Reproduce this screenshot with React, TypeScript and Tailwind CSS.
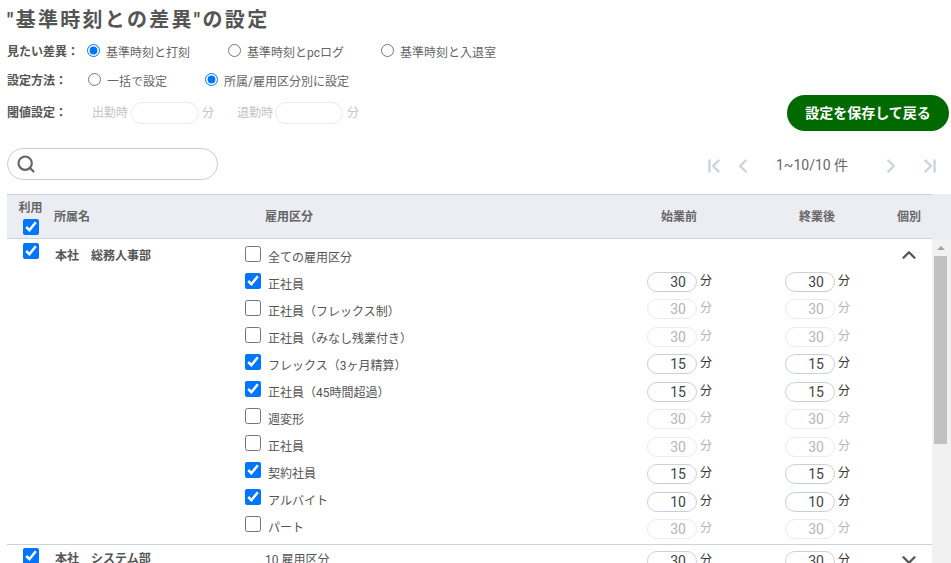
import React from "react";
import { Search, ChevronUp, ChevronDown, ChevronLeft, ChevronRight, ChevronFirst, ChevronLast } from "lucide-react";

const rows: [string, boolean, string][] = [
  ["正社員", true, "30"],
  ["正社員（フレックス制）", false, "30"],
  ["正社員（みなし残業付き）", false, "30"],
  ["フレックス（3ヶ月精算）", true, "15"],
  ["正社員（45時間超過）", true, "15"],
  ["週変形", false, "30"],
  ["正社員", false, "30"],
  ["契約社員", true, "15"],
  ["アルバイト", true, "10"],
  ["パート", false, "30"],
];

function Minutes({ value, on }: { value: string; on: boolean }) {
  return (
    <div className="flex items-center h-[20px]">
      <div className={`w-[50px] h-[20px] shrink-0 rounded-[10px] border text-right pr-[10px] text-[14px] leading-[19px] ${on ? "border-[#c8d0da] text-[#444]" : "border-[#e9ebef] text-[#b5b5b5]"}`}>{value}</div>
      <span className={`ml-[3px] text-[12px] -mt-[2px] ${on ? "text-[#333]" : "text-[#b5b5b5]"}`}>分</span>
    </div>
  );
}

function MinutesColumn({ w }: { w: string }) {
  return (
    <div className={`${w} shrink-0 pt-[33px]`}>
      {rows.map(([n, on, v], i) => (
        <div key={i} className="h-[27.45px]">
          <Minutes value={v} on={on} />
        </div>
      ))}
    </div>
  );
}

function Radio({ checked, label, w }: { checked?: boolean; label: string; w: string }) {
  return (
    <label className={`flex items-center ${w}`}>
      <input type="radio" readOnly checked={!!checked} className="w-[13px] h-[13px] m-0 -mt-[3px]" />
      <span className="ml-[6px] text-[12px] text-[#666] mt-[1px]">{label}</span>
    </label>
  );
}

export default function App() {
  return (
    <div className="relative w-[951px] h-[563px] overflow-hidden bg-white text-[#555] flex flex-col" style={{ fontFamily: "Roboto, 'Noto Sans CJK JP', sans-serif" }}>
      <div className="flex flex-col pl-[7px] pr-[2px]">
        <h1 className="h-[42px] pt-[6px] text-[20px] leading-[28px] font-bold tracking-[2.3px] text-[#555]">"基準時刻との差異"の設定</h1>
        <div className="flex items-center h-[20px]">
          <span className="w-[80px] text-[12px] font-bold text-[#555]">見たい差異：</span>
          <Radio checked label="基準時刻と打刻" w="w-[141px]" />
          <Radio label="基準時刻とpcログ" w="w-[153px]" />
          <Radio label="基準時刻と入退室" w="w-[130px]" />
        </div>
        <div className="flex items-center h-[20px] mt-[9px]">
          <span className="w-[81px] text-[12px] font-bold text-[#555]">設定方法：</span>
          <Radio label="一括で設定" w="w-[117px]" />
          <Radio checked label="所属/雇用区分別に設定" w="w-[160px]" />
        </div>
        <div className="flex items-center justify-between h-[36px] mt-[4px]">
          <div className="flex items-center text-[12px] text-[#c4c4c4]">
            <span className="w-[85px] font-bold text-[#555]">閾値設定：</span>
            <span className="w-[39px]">出勤時</span>
            <div className="w-[68px] h-[22px] rounded-[11px] border border-[#e9ebef]" />
            <span className="ml-[3px] w-[35px]">分</span>
            <span className="w-[38px]">退勤時</span>
            <div className="w-[68px] h-[22px] rounded-[11px] border border-[#e9ebef]" />
            <span className="ml-[4px]">分</span>
          </div>
          <button className="w-[162px] h-[36px] rounded-[18px] bg-[#006a00] text-white text-[14px] font-bold">設定を保存して戻る</button>
        </div>
        <div className="flex items-center justify-between h-[32px] mt-[17px]">
          <div className="w-[211px] h-[32px] rounded-[16px] border border-[#c8d0da] flex items-center pl-[8px]">
            <Search size={20} strokeWidth={2.6} className="text-[#666]" />
          </div>
          <div className="flex items-center h-[32px] mt-[3px] text-[#cbd3dd] pr-[8px]">
            <ChevronFirst size={22} strokeWidth={2.6} />
            <ChevronLeft size={22} strokeWidth={2.6} className="ml-[7px]" />
            <span className="w-[121px] pl-[22px] text-[14px] text-[#666]">1~10/10 件</span>
            <ChevronRight size={22} strokeWidth={2.6} className="ml-[5px]" />
            <ChevronLast size={22} strokeWidth={2.6} className="ml-[17px]" />
          </div>
        </div>
      </div>

      <div className="ml-[7px] mt-[14px] h-[45px] flex bg-[#ebedf2] text-[12px] font-bold text-[#666] shrink-0">
        <div className="w-[925px] border-y border-[#ccd3dd] flex items-center">
          <div className="w-[47px] flex flex-col items-center">
            <span className="text-[12px] leading-[18px]">利用</span>
            <input type="checkbox" readOnly checked className="w-4 h-4 m-0 mt-[2px]" />
          </div>
          <div className="w-[211px]">所属名</div>
          <div className="w-[381px]">雇用区分</div>
          <div className="w-[138px] pl-[15px]">始業前</div>
          <div className="w-[113px] pl-[15px]">終業後</div>
          <div>個別</div>
        </div>
        <div className="w-[19px]" />
      </div>

      <div className="flex-1 min-h-0 flex overflow-hidden ml-[7px]">
        <div className="w-[925px] shrink-0 overflow-hidden">
          <div className="flex h-[306px] border-b border-[#ccd3dd]">
            <div className="w-[16px] ml-[16px] pt-[4px]"><input type="checkbox" readOnly checked className="block w-4 h-4 m-0" /></div>
            <div className="w-[190px] ml-[16px] pt-[8px] text-[12px] font-bold leading-[18px]">本社　総務人事部</div>
            <div className="w-[606px] shrink-0 flex">
              <div className="w-[402px] shrink-0 pt-[7px]">
                {[["全ての雇用区分", false] as [string, boolean], ...rows.map(([n, on]) => [n, on] as [string, boolean])].map(([n, on], i) => (
                  <div key={i} className="flex h-[27px]">
                    <input type="checkbox" readOnly checked={on} className="block w-4 h-4 m-0 shrink-0" />
                    <span className="ml-[7px] mt-[3px] text-[12px] leading-[18px]">{n}</span>
                  </div>
                ))}
              </div>
              <MinutesColumn w="w-[138px]" />
              <MinutesColumn w="w-[66px]" />
            </div>
            <div className="flex-1"><ChevronUp size={22} strokeWidth={2.5} className="ml-[47px] mt-[5px] text-[#555]" /></div>
          </div>
          <div className="flex h-[40px]">
            <div className="w-[16px] ml-[16px] pt-[3px]"><input type="checkbox" readOnly checked className="block w-4 h-4 m-0" /></div>
            <div className="w-[190px] ml-[16px] pt-[5px] text-[12px] font-bold leading-[18px]">本社　システム部</div>
            <div className="w-[606px] shrink-0 flex pt-[6px]">
              <span className="w-[402px] shrink-0 pl-[20px] text-[12px] leading-[18px]">10 雇用区分</span>
              <div className="w-[138px] shrink-0"><Minutes value="30" on /></div>
              <div className="w-[66px] shrink-0"><Minutes value="30" on /></div>
            </div>
            <div className="flex-1"><ChevronDown size={22} strokeWidth={2.5} className="ml-[47px] mt-[4px] text-[#555]" /></div>
          </div>
        </div>
        <div className="w-[19px] bg-[#f1f1f1] flex flex-col items-start pl-[2px]">
          <div className="w-0 h-0 ml-[2.5px] mt-[7px] border-x-[4px] border-x-transparent border-b-[4px] border-b-[#a3a3a3]" />
          <div className="w-[13px] h-[188px] bg-[#c1c1c1] mt-[6px]" />
        </div>
      </div>
    </div>
  );
}
